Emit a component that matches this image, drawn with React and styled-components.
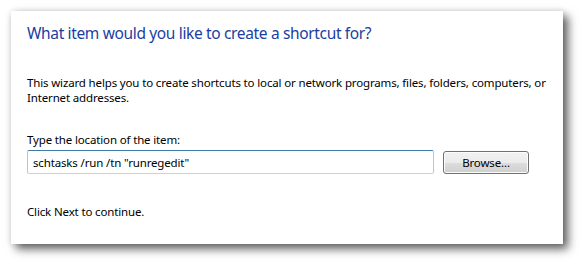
import styled, { createGlobalStyle } from 'styled-components'

const GlobalStyle = createGlobalStyle`
  html, body {
    margin: 0;
    padding: 0;
    background: #ffffff;
  }
  body {
    width: 583px;
    height: 264px;
    overflow: hidden;
    font-family: 'Noto Sans', 'Open Sans', sans-serif;
  }
`

const Stage = styled.div`
  width: 583px;
  height: 264px;
  padding: 11px 20px 20px 11px;
  box-sizing: border-box;
`

const Panel = styled.div`
  width: 552px;
  height: 233px;
  box-sizing: border-box;
  background: #ffffff;
  box-shadow: 5px 5px 9px rgba(0, 0, 0, 0.62), 0 0 6px rgba(0, 0, 0, 0.12);
  padding: 12px 16px 0 16px;
  display: flex;
  flex-direction: column;
`

const Title = styled.h1`
  margin: 0;
  font-size: 15.5px;
  line-height: 20px;
  font-weight: 400;
  color: #1a3ea0;
  letter-spacing: -0.35px;
`

const Text = styled.p`
  margin: ${(p) => p.$top || 0}px 0 0;
  font-size: 11.5px;
  line-height: 15px;
  color: #000000;
  letter-spacing: -0.15px;
`

const Row = styled.div`
  display: flex;
  align-items: center;
  gap: 9px;
  margin-top: 3px;
`

const Input = styled.div`
  width: 407px;
  height: 24px;
  box-sizing: border-box;
  border: 1px solid;
  border-color: #3d7bad #a9cbe6 #b7d9ed #a9cbe6;
  border-radius: 2px;
  padding: 0 5px;
  display: flex;
  align-items: center;
  font-size: 11.5px;
  letter-spacing: -0.15px;
  color: #000000;
`

const Button = styled.button`
  width: 86px;
  height: 23px;
  box-sizing: border-box;
  border: 1px solid #707070;
  border-radius: 3px;
  box-shadow: inset 0 0 0 1px #fcfcfc;
  background: linear-gradient(#f2f2f2 0%, #ebebeb 50%, #dddddd 51%, #cfcfcf 100%);
  font-family: inherit;
  font-size: 11.5px;
  letter-spacing: -0.15px;
  color: #000000;
  padding: 0;
  margin-top: 1px;
`

export default function App() {
  return (
    <>
      <GlobalStyle />
      <Stage>
        <Panel>
          <Title>What item would you like to create a shortcut for?</Title>
          <Text $top={32}>
            This wizard helps you to create shortcuts to local or network programs, files, folders, computers, or
            <br />
            Internet addresses.
          </Text>
          <Text $top={27}>Type the location of the item:</Text>
          <Row>
            <Input>schtasks /run /tn "runregedit"</Input>
            <Button>Browse...</Button>
          </Row>
          <Text $top={30}>Click Next to continue.</Text>
        </Panel>
      </Stage>
    </>
  )
}
